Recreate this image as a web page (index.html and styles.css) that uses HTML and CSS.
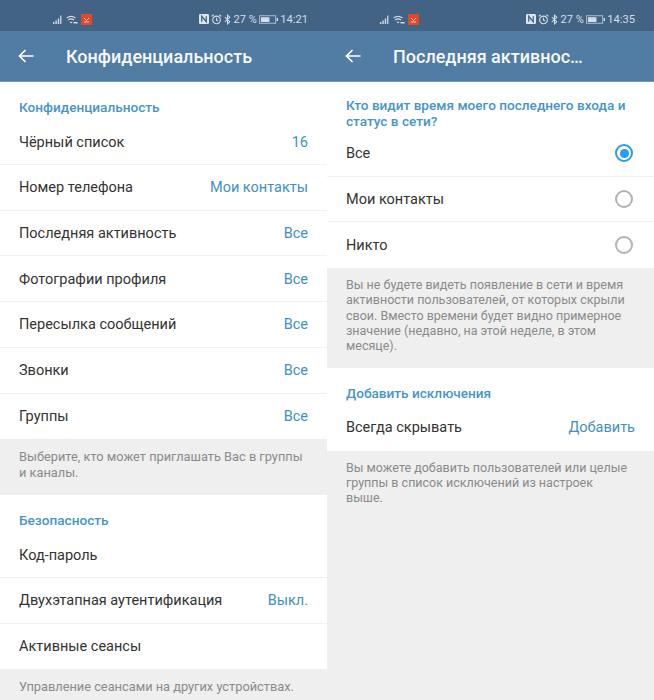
FILE: index.html
```html
<!DOCTYPE html>
<html lang="ru">
<head>
<meta charset="utf-8">
<title>Конфиденциальность</title>
<link rel="stylesheet" href="styles.css">
</head>
<body>
<div class="screens">
  <section class="screen screen-left">
    <div class="status">
      <div class="status-left">
        <svg class="ic" width="10" height="9" viewBox="0 0 10 9"><path class="dim" d="M0 7h1.4v2H0zM2.4 5.5h1.4V9H2.4zM4.8 3.5h1.4V9H4.8zM7.2 0.5h1.2V9H7.2z"/></svg>
        <svg class="ic" width="12" height="9" viewBox="0 0 12 9"><path class="stroke" d="M.7 3A7.5 7.5 0 0 1 9.5 3M2.3 5A4.8 4.8 0 0 1 8 5"/><path class="dim" d="M3.6 6.8h3L5 8.6zM7.5 7h4v1.6h-4z"/></svg>
        <svg class="ic" width="11" height="11" viewBox="0 0 11 11"><rect width="11" height="11" fill="#e2492b"/><path d="M3 4l2.5 2.5L8 4M3 8h5" fill="none" stroke="#f6c9b8" stroke-width="1"/></svg>
      </div>
      <div class="status-right">
        <svg class="ic" width="10" height="10" viewBox="0 0 11 11"><rect width="11" height="11" rx="1.5" fill="#dde5ee"/><path d="M3 8.5v-6l5 6v-6" fill="none" stroke="#426384" stroke-width="1.4"/></svg>
        <svg class="ic" width="11" height="11" viewBox="0 0 12 12"><circle class="stroke" cx="6" cy="6.5" r="4.2"/><path class="stroke" d="M6 4v2.7l1.8 1M.8 2.6 2.8.8M11.2 2.6 9.2.8"/></svg>
        <svg class="ic" width="7" height="11" viewBox="0 0 8 12"><path class="stroke" d="M1 3.3l5.6 5.2L4 11V1l2.6 2.5L1 8.7"/></svg>
        <span class="pct">27 %</span>
        <svg class="ic" width="19" height="9" viewBox="0 0 20 9"><rect x=".5" y=".5" width="17" height="8" class="stroke faint"/><path class="dim" d="M18.5 3H20v3h-1.5zM2 2h9v5H2z"/></svg>
        <span class="time">14:21</span>
      </div>
    </div>
    <header class="bar">
      <svg class="back" width="16" height="14" viewBox="0 0 16 14"><path d="M15.5 7H1.5M7.5 1 1.5 7l6 6" fill="none" stroke="#fff" stroke-width="1.7"/></svg>
      <h1 class="bar-title">Конфиденциальность</h1>
    </header>
    <div class="group">
      <h2 class="group-title">Конфиденциальность</h2>
      <div class="row"><span>Чёрный список</span><span class="val">16</span></div>
      <div class="row"><span>Номер телефона</span><span class="val">Мои контакты</span></div>
      <div class="row"><span>Последняя активность</span><span class="val">Все</span></div>
      <div class="row"><span>Фотографии профиля</span><span class="val">Все</span></div>
      <div class="row"><span>Пересылка сообщений</span><span class="val">Все</span></div>
      <div class="row"><span>Звонки</span><span class="val">Все</span></div>
      <div class="row last"><span>Группы</span><span class="val">Все</span></div>
    </div>
    <p class="note note-a">Выберите, кто может приглашать Вас в группы и каналы.</p>
    <div class="group">
      <h2 class="group-title">Безопасность</h2>
      <div class="row"><span>Код-пароль</span></div>
      <div class="row"><span>Двухэтапная аутентификация</span><span class="val">Выкл.</span></div>
      <div class="row last"><span>Активные сеансы</span></div>
    </div>
    <p class="note note-b">Управление сеансами на других устройствах.</p>
  </section>

  <section class="screen">
    <div class="status">
      <div class="status-left">
        <svg class="ic" width="10" height="9" viewBox="0 0 10 9"><path class="dim" d="M0 7h1.4v2H0zM2.4 5.5h1.4V9H2.4zM4.8 3.5h1.4V9H4.8zM7.2 0.5h1.2V9H7.2z"/></svg>
        <svg class="ic" width="12" height="9" viewBox="0 0 12 9"><path class="stroke" d="M.7 3A7.5 7.5 0 0 1 9.5 3M2.3 5A4.8 4.8 0 0 1 8 5"/><path class="dim" d="M3.6 6.8h3L5 8.6zM7.5 7h4v1.6h-4z"/></svg>
        <svg class="ic" width="11" height="11" viewBox="0 0 11 11"><rect width="11" height="11" fill="#e2492b"/><path d="M3 4l2.5 2.5L8 4M3 8h5" fill="none" stroke="#f6c9b8" stroke-width="1"/></svg>
      </div>
      <div class="status-right">
        <svg class="ic" width="10" height="10" viewBox="0 0 11 11"><rect width="11" height="11" rx="1.5" fill="#dde5ee"/><path d="M3 8.5v-6l5 6v-6" fill="none" stroke="#426384" stroke-width="1.4"/></svg>
        <svg class="ic" width="11" height="11" viewBox="0 0 12 12"><circle class="stroke" cx="6" cy="6.5" r="4.2"/><path class="stroke" d="M6 4v2.7l1.8 1M.8 2.6 2.8.8M11.2 2.6 9.2.8"/></svg>
        <svg class="ic" width="7" height="11" viewBox="0 0 8 12"><path class="stroke" d="M1 3.3l5.6 5.2L4 11V1l2.6 2.5L1 8.7"/></svg>
        <span class="pct">27 %</span>
        <svg class="ic" width="19" height="9" viewBox="0 0 20 9"><rect x=".5" y=".5" width="17" height="8" class="stroke faint"/><path class="dim" d="M18.5 3H20v3h-1.5zM2 2h9v5H2z"/></svg>
        <span class="time">14:35</span>
      </div>
    </div>
    <header class="bar">
      <svg class="back" width="16" height="14" viewBox="0 0 16 14"><path d="M15.5 7H1.5M7.5 1 1.5 7l6 6" fill="none" stroke="#fff" stroke-width="1.7"/></svg>
      <h1 class="bar-title">Последняя активнос…</h1>
    </header>
    <div class="group">
      <h2 class="group-title question">Кто видит время моего последнего входа и статус в сети?</h2>
      <div class="row"><span>Все</span><span class="radio on"></span></div>
      <div class="row"><span>Мои контакты</span><span class="radio"></span></div>
      <div class="row last"><span>Никто</span><span class="radio"></span></div>
    </div>
    <p class="note note-c">Вы не будете видеть появление в сети и время активности пользователей, от которых скрыли свои. Вместо времени будет видно примерное значение (недавно, на этой неделе, в этом месяце).</p>
    <div class="group">
      <h2 class="group-title">Добавить исключения</h2>
      <div class="row last"><span>Всегда скрывать</span><span class="val">Добавить</span></div>
    </div>
    <p class="note note-d">Вы можете добавить пользователей или целые группы в список исключений из настроек выше.</p>
  </section>
</div>
</body>
</html>
```
FILE: styles.css
```css
* { box-sizing: border-box; }
html, body { margin: 0; padding: 0; }
body {
  width: 654px;
  height: 700px;
  overflow: hidden;
  font-family: Roboto, "Noto Sans", sans-serif;
  background: #efefef;
}
.screens { display: grid; grid-template-columns: 327px 327px; height: 700px; }
.screen { display: flex; flex-direction: column; height: 700px; overflow: hidden; background: #efefef; }

.status {
  height: 31px;
  flex: none;
  display: flex;
  justify-content: space-between;
  align-items: center;
  padding: 7px 19px 0 53px;
  background: #426384;
  color: #d4dee8;
  font-size: 11px;
}
.status-left, .status-right { display: flex; align-items: center; gap: 2.2px; }
.status-left { gap: 3px; }
.ic { display: block; flex: none; }
.dim { fill: #d4dee8; }
.stroke { fill: none; stroke: #d4dee8; stroke-width: 1.2; }
.faint { stroke: #9fb3c7; }
.time { font-size: 11.2px; }

.bar {
  height: 51px;
  flex: none;
  display: flex;
  align-items: center;
  padding-left: 18px;
  background: #517ca3;
  border-bottom: 1px solid #6f95b8;
}
.back { flex: none; }
.bar-title {
  margin: 0 0 0 32px;
  font-size: 18px;
  font-weight: 500;
  color: #f6f8fa;
}

.group { background: #fff; flex: none; }
.group-title {
  margin: 0;
  height: 37px;
  padding: 17px 19px 0;
  font-size: 13.6px;
  line-height: 17px;
  font-weight: 500;
  color: #4795c8;
}
.screen-left .group-title { height: 37.4px; }
.group-title.question { height: 49px; padding-top: 15px; line-height: 16px; }
.row {
  height: 45.7px;
  display: flex;
  justify-content: space-between;
  align-items: center;
  padding: 0 19px;
  border-bottom: 1px solid #f0f0f0;
  font-size: 14.5px;
  color: #333;
}
.screen-left .row { padding-top: 1px; }
.row.last { border-bottom: 0; }
.val { color: #3f8fc4; }

.radio {
  width: 18px;
  height: 18px;
  border: 2px solid #b3b3b3;
  border-radius: 50%;
  margin-right: 2px;
  display: flex;
  align-items: center;
  justify-content: center;
}
.radio.on { border-color: #2a9aea; }
.radio.on::after { content: ""; width: 9px; height: 9px; border-radius: 50%; background: #2a9aea; }

.note {
  margin: 0;
  padding: 10px 19px 0;
  font-size: 12.5px;
  line-height: 15.3px;
  color: #8a8a8a;
  flex: none;
}
.screen-left .note { font-size: 12.8px; }
.note-a { height: 55.6px; padding-right: 24px; }
.note-b { flex: 1; }
.note-c { height: 100px; padding-top: 9px; }
.note-d { padding-top: 9px; padding-right: 25px; }
```
